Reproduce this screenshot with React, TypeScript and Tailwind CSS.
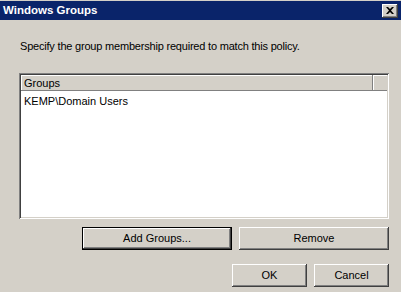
import React from 'react';

const raised =
  'shadow-[inset_-1px_-1px_#404040,inset_1px_1px_#ffffff,inset_-2px_-2px_#808080,inset_2px_2px_#d4d0c8]';

const Button = ({ label, width, isDefault }: { label: string; width: string; isDefault?: boolean }) => (
  <button
    className={`${width} h-[23px] bg-[#d4d0c8] text-[11px] text-black flex items-center justify-center ${
      isDefault
        ? 'border border-black shadow-[inset_-1px_-1px_#404040,inset_1px_1px_#ffffff,inset_-2px_-2px_#808080]'
        : raised
    }`}
  >
    {label}
  </button>
);

export default function App() {
  return (
    <div className="w-[401px] h-[292px] bg-[#d4d0c8] pt-[1px] font-['Liberation_Sans',Arial,sans-serif] text-[11px] text-black overflow-hidden">
      {/* Title bar */}
      <div className="h-[19px] bg-[#0a246a] flex items-center justify-between pl-[3px] pr-[3px]">
        <span className="text-white font-bold text-[11.5px] leading-none">Windows Groups</span>
        <div className={`w-[16px] h-[14px] bg-[#d4d0c8] flex items-center justify-center ${raised}`}>
          <svg width="8" height="7" viewBox="0 0 8 7">
            <path d="M0 0h2l2 2 2-2h2L5 3.5 8 7H6L4 5 2 7H0l3-3.5z" fill="#000" />
          </svg>
        </div>
      </div>

      <p className="pl-[20px] mt-[20px] leading-[13px] tracking-[-0.2px]">
        Specify the group membership required to match this policy.
      </p>

      {/* List view */}
      <div className="ml-[19px] mt-[20px] w-[370px] h-[146px] bg-white p-[2px] shadow-[inset_1px_1px_#808080,inset_-1px_-1px_#ffffff,inset_2px_2px_#404040,inset_-2px_-2px_#d4d0c8] flex flex-col">
        <div className="flex h-[16px] bg-[#d4d0c8]">
          <div className="w-[352px] pl-[3px] flex items-center shadow-[inset_-1px_-1px_#808080,inset_1px_1px_#ffffff]">
            Groups
          </div>
          <div className="flex-1 shadow-[inset_0_-1px_#808080,inset_1px_1px_#ffffff]" />
        </div>
        <div className="pl-[3px] pt-[4px] leading-[13px]">KEMP\Domain Users</div>
      </div>

      <div className="flex justify-end gap-[7px] pr-[12px] mt-[8px]">
        <Button label="Add Groups..." width="w-[150px]" isDefault />
        <Button label="Remove" width="w-[150px]" />
      </div>

      <div className="flex justify-end gap-[7px] pr-[12px] mt-[14px]">
        <Button label="OK" width="w-[75px]" />
        <Button label="Cancel" width="w-[75px]" />
      </div>
    </div>
  );
}
